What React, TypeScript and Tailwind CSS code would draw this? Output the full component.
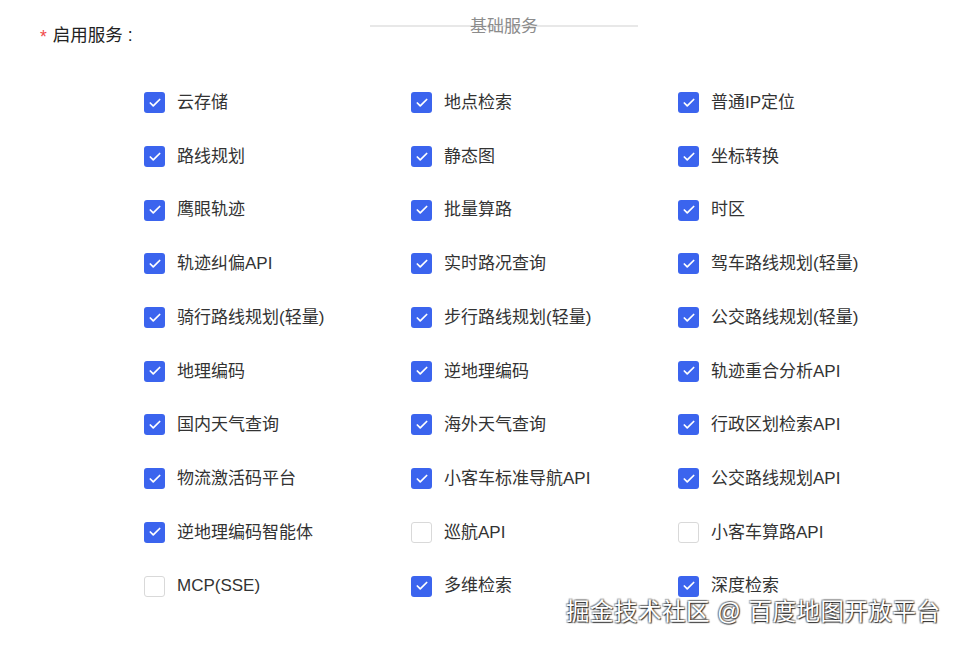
import { Check } from 'lucide-react';

type Service = { name: string; checked: boolean };

const services: Service[] = [
  { name: '云存储', checked: true },
  { name: '地点检索', checked: true },
  { name: '普通IP定位', checked: true },
  { name: '路线规划', checked: true },
  { name: '静态图', checked: true },
  { name: '坐标转换', checked: true },
  { name: '鹰眼轨迹', checked: true },
  { name: '批量算路', checked: true },
  { name: '时区', checked: true },
  { name: '轨迹纠偏API', checked: true },
  { name: '实时路况查询', checked: true },
  { name: '驾车路线规划(轻量)', checked: true },
  { name: '骑行路线规划(轻量)', checked: true },
  { name: '步行路线规划(轻量)', checked: true },
  { name: '公交路线规划(轻量)', checked: true },
  { name: '地理编码', checked: true },
  { name: '逆地理编码', checked: true },
  { name: '轨迹重合分析API', checked: true },
  { name: '国内天气查询', checked: true },
  { name: '海外天气查询', checked: true },
  { name: '行政区划检索API', checked: true },
  { name: '物流激活码平台', checked: true },
  { name: '小客车标准导航API', checked: true },
  { name: '公交路线规划API', checked: true },
  { name: '逆地理编码智能体', checked: true },
  { name: '巡航API', checked: false },
  { name: '小客车算路API', checked: false },
  { name: 'MCP(SSE)', checked: false },
  { name: '多维检索', checked: true },
  { name: '深度检索', checked: true },
];

function Checkbox({ checked }: { checked: boolean }) {
  if (checked) {
    return (
      <span className="flex h-[21px] w-[21px] shrink-0 items-center justify-center rounded-[3px] bg-[#3b64ee]">
        <Check size={14} strokeWidth={3} className="text-white" />
      </span>
    );
  }
  return <span className="h-[21px] w-[21px] shrink-0 rounded-[3px] border border-[#d9d9d9] bg-white" />;
}

export default function App() {
  return (
    <div
      className="relative h-[647px] w-[960px] overflow-hidden bg-white text-[#333]"
      style={{ fontFamily: '"Liberation Sans", "Noto Sans CJK SC", sans-serif' }}
    >
      {/* header */}
      <div className="flex items-start">
        <div className="ml-[40px] mt-[20px] flex w-[330px] items-center text-[17.5px] leading-[26px] text-[#222]">
          <span className="mr-[6px] mt-[4px] text-[#f04848]">*</span>
          <span>启用服务 :</span>
        </div>
        <div className="relative mt-[25px] h-[2px] w-[268px] bg-[#e8e8e8]">
          <span className="absolute left-1/2 top-[-11px] -translate-x-1/2 text-[17px] leading-[26px] text-[#8c8c8c]">
            基础服务
          </span>
        </div>
      </div>

      {/* services grid */}
      <div className="ml-[144px] mt-[26px] grid w-[801px] grid-cols-3 auto-rows-[53.7px]">
        {services.map((s) => (
          <label key={s.name} className="flex items-center gap-[12px] text-[17px] text-[#333]">
            <Checkbox checked={s.checked} />
            <span>{s.name}</span>
          </label>
        ))}
      </div>

      {/* watermark */}
      <div
        className="absolute left-[566px] top-[596px] text-[23.5px] leading-[32px] tracking-[0.5px] text-white"
        style={{ textShadow: '1px 1px 1px rgba(0,0,0,0.75), -1px -1px 1px rgba(0,0,0,0.35), 1px -1px 1px rgba(0,0,0,0.35), -1px 1px 1px rgba(0,0,0,0.35)' }}
      >
        掘金技术社区 @ 百度地图开放平台
      </div>
    </div>
  );
}
